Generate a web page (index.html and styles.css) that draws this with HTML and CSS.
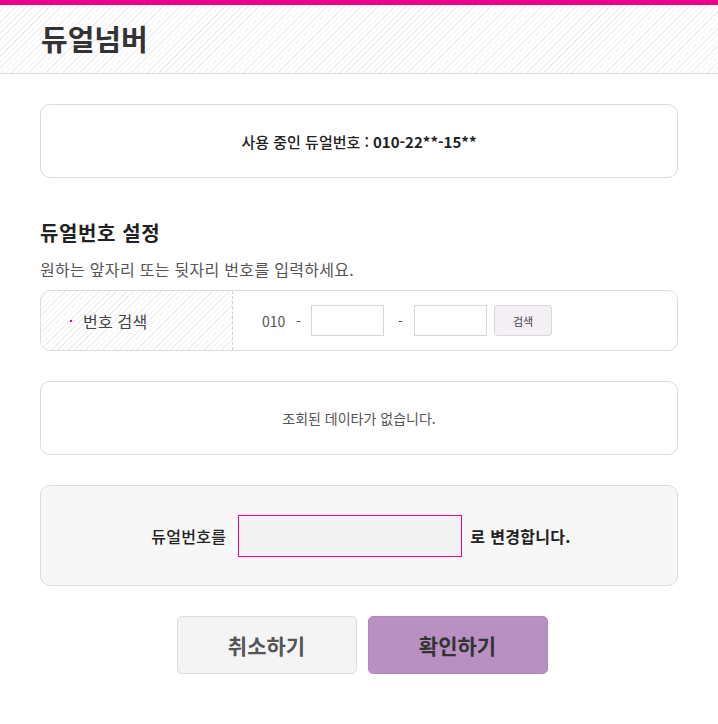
FILE: index.html
```html
<!DOCTYPE html>
<html lang="ko">
<head>
<meta charset="utf-8">
<link rel="stylesheet" href="styles.css">
</head>
<body>
<header class="header">
  <h1 class="title">듀얼넘버</h1>
</header>
<main class="content">
  <section class="box current">사용 중인 듀얼번호 : <b>010-22**-15**</b></section>

  <h2 class="sec-title">듀얼번호 설정</h2>
  <p class="sec-desc">원하는 앞자리 또는 뒷자리 번호를 입력하세요.</p>

  <div class="box search">
    <div class="search-label"><span class="dot"></span>번호 검색</div>
    <div class="search-field">
      <span class="prefix">010</span>
      <span class="dash">-</span>
      <input class="num" type="text">
      <span class="dash dash2">-</span>
      <input class="num" type="text">
      <button class="btn-search">검색</button>
    </div>
  </div>

  <section class="box empty">조회된 데이타가 없습니다.</section>

  <section class="box change">
    <span class="change-label">듀얼번호를</span>
    <input class="change-input" type="text">
    <span class="change-text">로 변경합니다.</span>
  </section>

  <div class="actions">
    <button class="btn btn-cancel">취소하기</button>
    <button class="btn btn-ok">확인하기</button>
  </div>
</main>
</body>
</html>
```

FILE: styles.css
```css
* { box-sizing: border-box; }
html, body { margin: 0; padding: 0; background: #fff; }
body {
  font-family: "Noto Sans CJK KR", "Noto Sans", sans-serif;
  color: #333;
  border-top: 5px solid #ec008c;
}
.header {
  height: 69px;
  border-bottom: 1px solid #dcdcdc;
  background: repeating-linear-gradient(-45deg, #fff 0 3px, #efefef 3px 4px);
  display: flex;
  align-items: center;
  padding-left: 41px;
}
.title {
  margin: 0;
  font-size: 29px;
  font-weight: 700;
  color: #333;
  line-height: 1;
  padding-bottom: 1px;
}
.content {
  padding: 30px 40px 0 40px;
}
.box {
  border: 1px solid #dcdcdc;
  border-radius: 10px;
  background: #fff;
}
.current {
  height: 74px;
  display: flex;
  align-items: center;
  justify-content: center;
  font-size: 15px;
  color: #222;
  font-weight: 500;
}
.current b { font-weight: 700; margin-left: 4px; }
.sec-title {
  margin: 41px 0 0 0;
  font-size: 20px;
  letter-spacing: 0.6px;
  font-weight: 700;
  color: #222;
  line-height: 28px;
}
.sec-desc {
  margin: 13px 0 0 0;
  font-size: 16px;
  letter-spacing: 0.3px;
  color: #555;
  line-height: 18px;
}
.search {
  margin-top: 12px;
  height: 61px;
  display: flex;
  overflow: hidden;
}
.search-label {
  width: 192px;
  border-right: 1px dashed #d0d0d0;
  background: repeating-linear-gradient(-45deg, #fff 0 3px, #efefef 3px 4px);
  display: flex;
  align-items: center;
  padding-left: 29px;
  font-size: 16px;
  letter-spacing: 0.2px;
  color: #444;
}
.dot {
  width: 2px; height: 2px;
  background: #ec008c;
  margin-right: 11px;
  margin-top: 1px;
}
.search-field {
  display: flex;
  align-items: center;
  padding-left: 29px;
  font-size: 14px;
  color: #555;
}
.prefix { width: 26px; }
.dash { width: 16px; padding-left: 8px; }
.search-field .dash:first-of-type { margin-left: 2px; }
.dash2 { margin-left: 7px; width: 23px; padding-left: 7px; }
.num {
  width: 73px;
  height: 31px;
  border: 1px solid #d6d6d6;
  border-radius: 0;
  margin: 0 0 0 7px;
  padding: 0;
  background: #fff;
}
.dash2 + .num { margin-left: 0; }
.btn-search {
  margin-left: 7px;
  width: 58px;
  height: 31px;
  background: #f3eff5;
  border: 1px solid #d8d8d8;
  border-radius: 3px;
  font-family: inherit;
  font-size: 11px;
  color: #444;
  padding: 0;
}
.empty {
  margin-top: 30px;
  height: 74px;
  display: flex;
  align-items: center;
  justify-content: center;
  font-size: 14px;
  color: #555;
}
.change {
  margin-top: 30px;
  height: 101px;
  background: #f7f7f7;
  display: flex;
  align-items: center;
  justify-content: center;
  padding-left: 4px;
  font-size: 16px;
  color: #222;
  font-weight: 500;
}
.change-label { letter-spacing: 0.3px; }
.change-input {
  width: 224px;
  height: 42px;
  margin: 0 8px 0 12px;
  border: 1px solid #ec008c;
  background: #f3f3f3;
  padding: 0;
}
.change-text { font-weight: 700; letter-spacing: 0.3px; }
.actions {
  margin-top: 30px;
  display: flex;
  justify-content: center;
  gap: 11px;
  padding-left: 6px;
}
.btn {
  width: 180px;
  height: 58px;
  border-radius: 5px;
  font-family: inherit;
  font-size: 21px;
  font-weight: 700;
  padding: 0;
}
.btn-cancel {
  background: #f4f4f4;
  border: 1px solid #dcdcdc;
  color: #555;
}
.btn-ok {
  background: #b890c2;
  border: 1px solid #b08abb;
  color: #333;
}
```
